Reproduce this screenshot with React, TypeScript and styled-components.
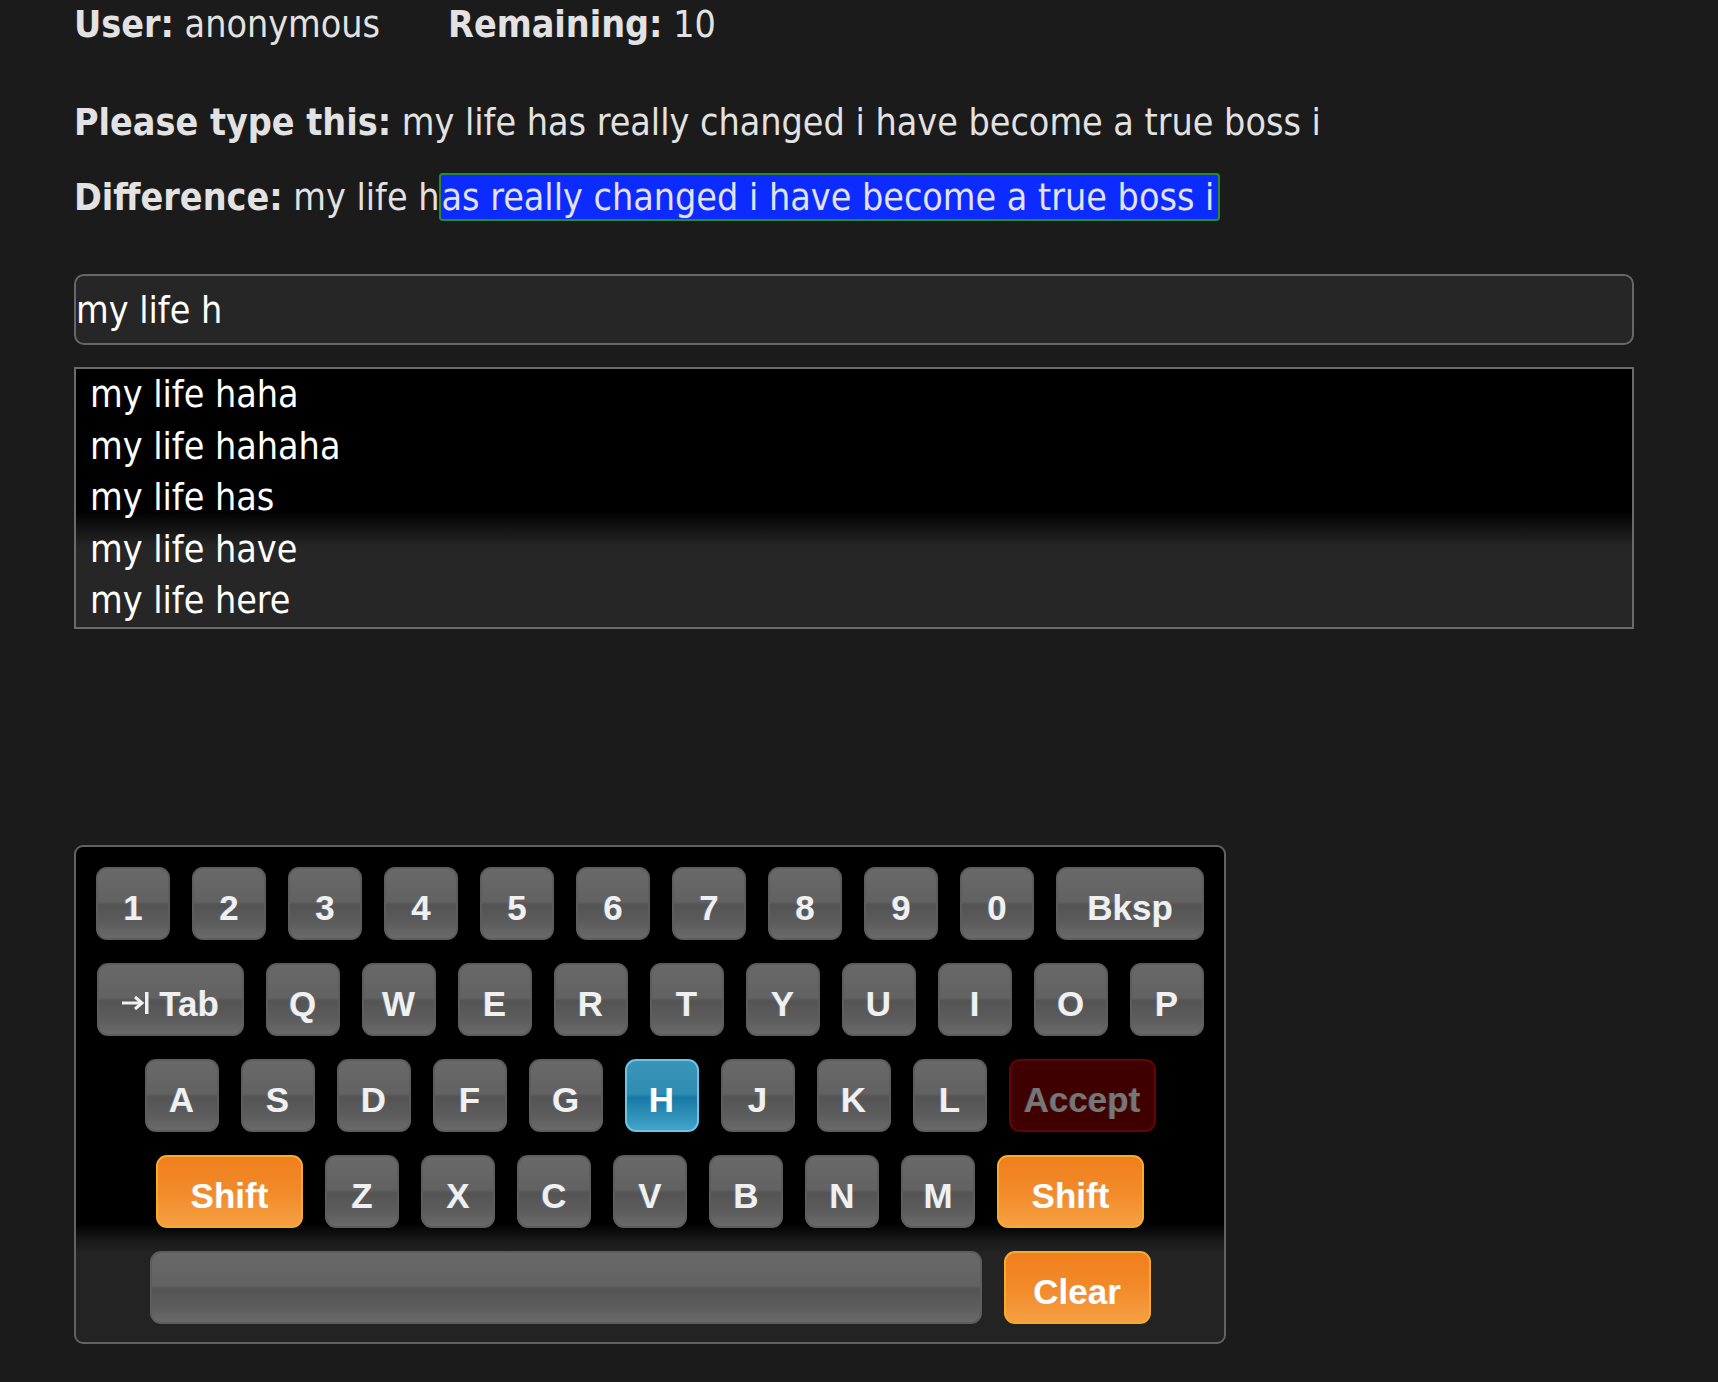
import { createGlobalStyle } from "styled-components";
import styled from "styled-components";

const GlobalStyle = createGlobalStyle`
  html, body {
    margin: 0;
    padding: 0;
    background-color: #1b1b1b;
  }
  body {
    font-family: "DejaVu Sans Condensed", "DejaVu Sans", sans-serif;
    color: #e2e2e2;
  }
`;

const Page = styled.main`
  padding-left: 74px;
  width: 1560px;
  font-size: 37.3px;
`;

const StatusBar = styled.div`
  display: flex;
  gap: 68px;
  height: 48px;
  line-height: 48px;
`;

const Label = styled.b`
  font-weight: 700;
`;

const Line = styled.p<{ $top: number }>`
  margin: ${(p) => p.$top}px 0 0;
  line-height: 48px;
  white-space: nowrap;
`;

const Diff = styled.span`
  background-color: #0c2bff;
  border: 2px solid #2b8a2e;
  border-radius: 4px;
  padding: 0 4px 0 0;
`;

const Field = styled.input`
  display: block;
  box-sizing: border-box;
  width: 1560px;
  height: 71px;
  margin-top: 53px;
  padding: 0;
  border: 2px solid #676767;
  border-radius: 10px;
  background-color: #262626;
  color: #ffffff;
  font-family: inherit;
  font-size: 37.3px;
  outline: none;
`;

const Suggestions = styled.ul`
  box-sizing: border-box;
  width: 1560px;
  margin: 22px 0 0;
  padding: 0 0 0 14px;
  list-style: none;
  border: 2px solid #6a6a6a;
  background: linear-gradient(to bottom, #000 0%, #000 55%, #141414 62%, #262626 69%, #262626 100%);
`;

const Suggestion = styled.li`
  color: #ffffff;
  line-height: 51.6px;
`;

const Keyboard = styled.div`
  box-sizing: border-box;
  width: 1152px;
  margin-top: 216px;
  padding: 20px 20px 18px;
  border: 2px solid #626262;
  border-radius: 9px;
  background: linear-gradient(to bottom, #000 0%, #000 76%, #161616 79%, #232323 82%, #232323 100%);
  display: flex;
  flex-direction: column;
  align-items: center;
  gap: 23px;
  font-family: "Liberation Sans", Arial, sans-serif;
`;

const KeyRow = styled.div`
  display: flex;
  gap: 22px;
`;

type Tone = "gray" | "orange" | "blue" | "red";

const tones: Record<Tone, { bg: string; border: string; color: string }> = {
  gray: {
    bg: "linear-gradient(to bottom, #696969 0%, #626262 47%, #545454 52%, #5b5b5b 75%, #6a6a6a 100%)",
    border: "#5d5d5d",
    color: "#f0f0f0",
  },
  orange: {
    bg: "linear-gradient(to bottom, #f07f1d 0%, #f28a2a 50%, #f5a043 100%)",
    border: "#f8aa2c",
    color: "#ffffff",
  },
  blue: {
    bg: "linear-gradient(to bottom, #3a95b8 0%, #2f8db2 47%, #177aa4 53%, #2c8cb5 75%, #43a4c9 100%)",
    border: "#6cc3e4",
    color: "#ffffff",
  },
  red: {
    bg: "#3e0000",
    border: "#640404",
    color: "#767676",
  },
};

const Key = styled.div<{ $w?: number; $tone?: Tone }>`
  box-sizing: border-box;
  width: ${(p) => p.$w ?? 74}px;
  height: 73px;
  padding-top: 10px;
  border-radius: 11px;
  border: 2px solid ${(p) => tones[p.$tone ?? "gray"].border};
  background: ${(p) => tones[p.$tone ?? "gray"].bg};
  color: ${(p) => tones[p.$tone ?? "gray"].color};
  font-size: 35px;
  font-weight: 700;
  display: flex;
  align-items: center;
  justify-content: center;
  gap: 8px;
  text-shadow: -1px 0 0 rgba(120, 190, 255, 0.25);
`;

const TabIcon = () => (
  <svg width="30" height="24" viewBox="0 0 30 24" style={{ marginTop: -2 }}>
    <path d="M1 12 H20" stroke="#f0f0f0" strokeWidth="3" fill="none" />
    <path d="M14 6 L21 12 L14 18" stroke="#f0f0f0" strokeWidth="3" fill="none" />
    <rect x="24" y="1" width="3.5" height="22" fill="#f0f0f0" />
  </svg>
);

const rowOne = ["1", "2", "3", "4", "5", "6", "7", "8", "9", "0"];
const rowTwo = ["Q", "W", "E", "R", "T", "Y", "U", "I", "O", "P"];
const rowThree = ["A", "S", "D", "F", "G", "H", "J", "K", "L"];
const rowFour = ["Z", "X", "C", "V", "B", "N", "M"];

const suggestions = ["my life haha", "my life hahaha", "my life has", "my life have", "my life here"];

const App = () => {
  return (
    <Page>
      <GlobalStyle />
      <StatusBar>
        <span>
          <Label>User:</Label> anonymous
        </span>
        <span>
          <Label>Remaining:</Label> 10
        </span>
      </StatusBar>
      <Line $top={50}>
        <Label>Please type this:</Label> my life has really changed i have become a true boss i
      </Line>
      <Line $top={27}>
        <Label>Difference:</Label> my life h<Diff>as really changed i have become a true boss i</Diff>
      </Line>
      <Field type="text" defaultValue="my life h" />
      <Suggestions>
        {suggestions.map((s) => (
          <Suggestion key={s}>{s}</Suggestion>
        ))}
      </Suggestions>
      <Keyboard>
        <KeyRow>
          {rowOne.map((k) => (
            <Key key={k}>{k}</Key>
          ))}
          <Key $w={148}>Bksp</Key>
        </KeyRow>
        <KeyRow>
          <Key $w={147}>
            <TabIcon />
            Tab
          </Key>
          {rowTwo.map((k) => (
            <Key key={k}>{k}</Key>
          ))}
        </KeyRow>
        <KeyRow>
          {rowThree.map((k) => (
            <Key key={k} $tone={k === "H" ? "blue" : "gray"}>
              {k}
            </Key>
          ))}
          <Key $w={147} $tone="red">
            Accept
          </Key>
        </KeyRow>
        <KeyRow>
          <Key $w={147} $tone="orange">
            Shift
          </Key>
          {rowFour.map((k) => (
            <Key key={k}>{k}</Key>
          ))}
          <Key $w={147} $tone="orange">
            Shift
          </Key>
        </KeyRow>
        <KeyRow>
          <Key $w={832} />
          <Key $w={147} $tone="orange">
            Clear
          </Key>
        </KeyRow>
      </Keyboard>
    </Page>
  );
};

export default App;
